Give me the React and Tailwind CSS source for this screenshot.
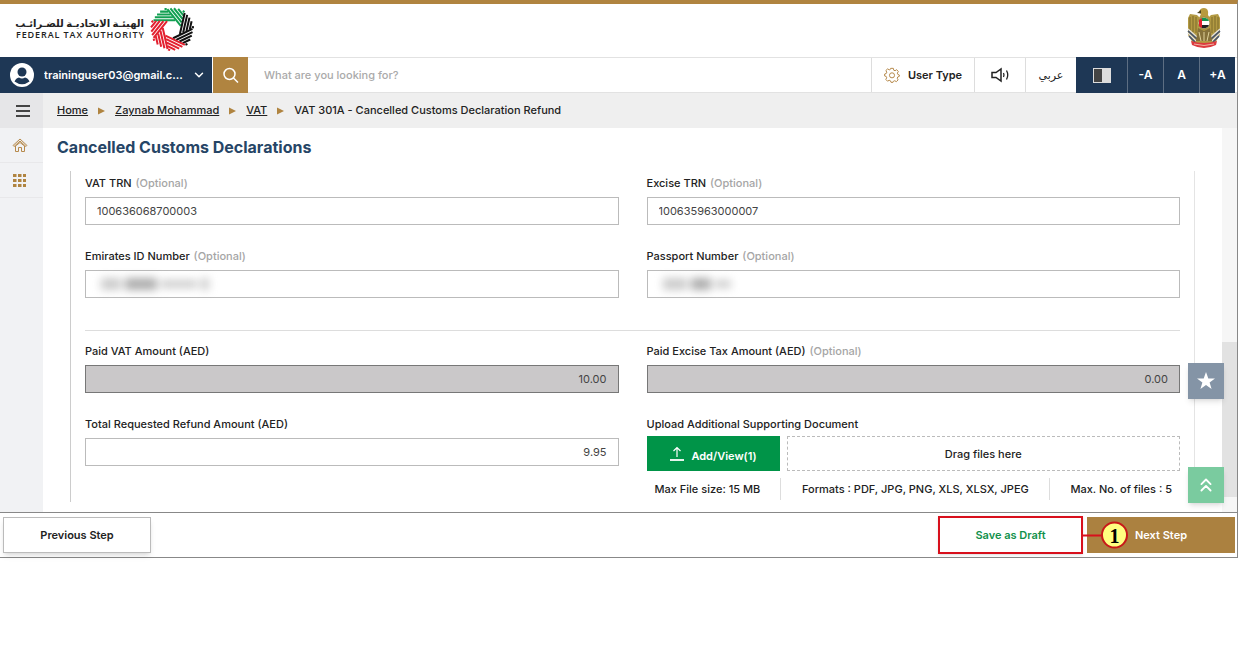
import { ChevronDown, ChevronsUp } from 'lucide-react';

// one fan of parallel stripes per side of the heptagon in the middle
const FANS = ['#12a052', '#12a052', '#111111', '#111111', '#e3202f', '#e3202f', '#e3202f'];

const LogoMark = () => (
    <svg viewBox="-50 -50 100 100" className="size-[44px]" aria-hidden="true">
        {FANS.map((color, i) => (
            <path
                key={i}
                transform={`rotate(${(i * 360) / 7})`}
                stroke={color}
                strokeWidth="4.6"
                fill="none"
                d="M-42 -20H7M-39 -26.500H2M-34 -33H-3M-27 -39.500H-8M-17 -45.500H-12"
            />
        ))}
    </svg>
);

const Emblem = () => (
    <svg viewBox="0 0 34 42" className="h-[42px] w-[34px]" aria-hidden="true">
        <path d="M1 11L3 7L10 8L14 12H20L24 8L31 7L33 11V28L28 36H6L1 28Z" fill="#b39a43" />
        <path d="M12 5Q13 1 17 1Q22 1 21 8L24 13H11L14 7Z" fill="#b89a3e" />
        <path d="M14 3L10 6L14 6.500Z" fill="#4d4423" />
        <path d="M3 10V24M6 9V25M9 10V26M25 10V26M28 9V25M31 10V24" stroke="#7d6a2a" strokeWidth="1" />
        <path d="M1 22L10 30M1 26L9 34M33 22L24 30M33 26L25 34" stroke="#e4e2dc" strokeWidth="1.400" />
        <path d="M1 24L10 32M2 29L8 35M33 24L24 32M32 29L26 35" stroke="#45546f" strokeWidth="1.600" />
        <path d="M11 21L17 24L23 21L25 34H9Z" fill="#85713a" />
        <path d="M12 25L14 34M17 25V34M22 25L20 34" stroke="#e0d29a" strokeWidth="1" />
        <circle cx="17" cy="16" r="6" fill="#fff" stroke="#9a8438" />
        <path d="M12 14A5.500 5.500 0 0 1 22 14Z" fill="#15934e" />
        <path d="M12 18A5.500 5.500 0 0 0 22 18Z" fill="#222" />
        <path d="M12 13V19L15 21V11Z" fill="#e3202f" />
        <path d="M4 34Q17 38 30 34L29 38Q17 44 5 38Z" fill="#dc3a3f" />
        <path d="M7 37Q17 40 27 37" stroke="#f0b4a4" strokeWidth="1" fill="none" />
    </svg>
);

const GearIcon = () => (
    <svg viewBox="0 0 24 24" className="size-4" fill="none" stroke="#b68a4c" strokeWidth="1.500" aria-hidden="true">
        <path d="M10 2h4l.6 2.800 2 .8L19 4l2.500 2.800-1.500 2.400.8 2 2.200.8v2l-2.500 1-.6 1.900 1.300 2.500L18.500 22l-2.400-1.400-2 .8L13.500 23h-3l-.8-2.300-2-.8L5.300 21.300 2.700 18.600l1.400-2.400-.8-2L1 13.500v-3l2.400-.8.8-2L2.800 5.300 5.500 2.800l2.300 1.500 1.700-.7z" />
        <circle cx="12" cy="12.500" r="3.800" />
    </svg>
);

const SpeakerIcon = () => (
    <svg viewBox="0 0 20 16" className="h-4 w-5" fill="none" stroke="#222" strokeWidth="1.500" aria-hidden="true">
        <path d="M2 5.500H6L11 2V14L6 10.500H2Z" />
        <path d="M13.500 6Q14.500 8 13.500 10M16.500 3.500Q19 8 16.500 12.500" strokeWidth="1.300" />
    </svg>
);

const HomeIcon = () => (
    <svg viewBox="0 0 16 16" className="size-4" fill="none" stroke="#b68a4c" strokeWidth="1" aria-hidden="true">
        <path d="M1 8.500L8 2L15 8.500L14 9.500L8 4L2 9.500Z" />
        <path d="M3.500 9V14.500H6.500V10.500H9.500V14.500H12.500V9L8 5.500Z" />
    </svg>
);

const GridIcon = () => (
    <svg viewBox="0 0 13 13" className="size-[13px]" fill="#b08440" aria-hidden="true">
        {[0, 5, 10].map((y) => [0, 5, 10].map((x) => (
            <rect key={`${x}-${y}`} x={x} y={y} width="3.500" height="3" />
        )))}
    </svg>
);

const UploadIcon = () => (
    <svg viewBox="0 0 16 16" className="size-4" fill="none" stroke="#fff" aria-hidden="true">
        <path d="M8 11V2M4.500 5L8 1.500L11.500 5" strokeWidth="1.200" />
        <path d="M1 14H15" strokeWidth="1.800" />
    </svg>
);

const StarIcon = () => (
    <svg viewBox="0 0 20 20" className="size-5" fill="currentColor" aria-hidden="true">
        <path d="M10 1L12.300 7.400H19L13.600 11.400L15.600 18L10 14L4.400 18L6.400 11.400L1 7.400H7.700Z" />
    </svg>
);

const Separator = () => (
    <svg viewBox="0 0 7 8" className="h-2 w-[7px]" fill="#b08440" aria-hidden="true">
        <path d="M0 0.500L7 4L0 7.500Z" />
    </svg>
);

// stand-in for a value that is hidden from view
const Redacted = ({ wide }) => (
    <div className="absolute top-2 left-4 flex items-center gap-1 blur-[4px]">
        <span className={`h-3 bg-[#999]/50 ${wide ? 'w-5' : 'w-6'}`} />
        <span className={`h-3 bg-[#777]/60 ${wide ? 'w-8' : 'w-5'}`} />
        <span className={`h-2 bg-[#999]/50 ${wide ? 'w-9' : 'w-4'}`} />
        {wide && <span className="h-3 w-2 bg-[#999]/50" />}
    </div>
);

const Field = ({ id, label, optional, value, numeric, disabled, masked, wide }) => (
    <div className="min-w-0 flex-1">
        <label htmlFor={id} className="block h-5 text-[11px] leading-3 font-medium text-[#222]">
            {label} {optional && <span className="ml-px text-[#a5a5a5]">(Optional)</span>}
        </label>
        <div className="relative">
            <input
                id={id}
                type="text"
                defaultValue={value}
                disabled={disabled}
                className={`block h-7 w-full border px-[11px] text-[11px] text-[#444] ${numeric ? 'text-right' : ''} ${disabled ? 'border-[#777] bg-[#cac8c9]' : 'border-[#bbb] bg-white'}`}
            />
            {masked && <Redacted wide={wide} />}
        </div>
    </div>
);

const Header = () => (
    <header className="flex h-[53px] items-start justify-between px-4 pt-[3px]">
        <div className="flex items-center gap-[6px]">
            <div className="w-32 text-right">
                <div dir="rtl" lang="ar" className="text-[10px] leading-3 font-bold whitespace-nowrap text-[#222]">الهيئـة الاتحاديـة للضـرائـب</div>
                <div className="font-['Open_Sans',sans-serif] text-[9px] leading-3 font-semibold tracking-widest whitespace-nowrap text-[#222]">FEDERAL TAX AUTHORITY</div>
            </div>
            <LogoMark />
        </div>
        <Emblem />
    </header>
);

const Toolbar = () => (
    <div className="flex h-9 border-y border-[#e2e2e2] pr-[2px] text-[11px] font-semibold text-[#222]">
        <button className="-my-px flex w-[212px] items-center bg-[#1e3755] pr-[6px] pl-[10px] text-white">
            <svg viewBox="0 0 24 24" className="mr-[10px] size-6 shrink-0" aria-hidden="true">
                <circle cx="12" cy="12" r="12" fill="#fff" />
                <circle cx="12" cy="9" r="4.500" fill="#1e3755" />
                <path d="M4.500 18.500Q6 15 9 14.500Q12 16.500 15 14.500Q18 15 19.500 18.500Q12 24 4.500 18.500Z" fill="#1e3755" />
            </svg>
            <span className="flex-1 truncate text-left">traininguser03@gmail.c...</span>
            <ChevronDown size={14} strokeWidth={2.5} />
        </button>
        <button aria-label="Search" className="-my-px ml-px flex w-[35px] items-center justify-center bg-[#b08440] text-white">
            <svg viewBox="0 0 16 16" className="size-4" fill="none" stroke="currentColor" strokeWidth="1.500" aria-hidden="true">
                <circle cx="6.500" cy="7" r="5.500" />
                <path d="M10.500 11L15 15.500" />
            </svg>
        </button>
        <input aria-label="Search text" placeholder="What are you looking for?" className="min-w-0 flex-1 px-4 font-medium placeholder:text-[#aaa]" />
        <button className="flex w-[103px] items-center justify-center gap-2 border-l border-[#ddd]">
            <GearIcon />
            User Type
        </button>
        <button aria-label="Listen" className="flex w-[51px] items-center justify-center border-l border-[#ddd]">
            <SpeakerIcon />
        </button>
        <button lang="ar" className="w-[51px] border-l border-[#ddd] font-medium">عربي</button>
        <div className="-my-px flex bg-[#1e3755] text-white">
            <button aria-label="Contrast" className="flex w-[51px] items-center justify-center">
                <span className="flex h-[15px] w-[18px] border border-[#ddd]">
                    <span className="flex-1 bg-[#444]" />
                    <span className="flex-1 bg-[#ddd]" />
                </span>
            </button>
            <button className="w-9 border-l border-[#5d6e83] text-xs">-A</button>
            <button className="w-9 border-l border-[#5d6e83] text-xs">A</button>
            <button className="w-9 border-l border-[#5d6e83] text-xs">+A</button>
        </div>
    </div>
);

const Breadcrumb = () => (
    <div className="flex h-[35px] bg-[#efefef]">
        <button aria-label="Menu" className="flex w-[43px] items-center justify-center bg-[#e6e6e8] pl-[2px]">
            <span className="flex w-[14px] flex-col gap-[3px]">
                <span className="h-[2px] bg-[#444]" />
                <span className="h-[2px] bg-[#444]" />
                <span className="h-[2px] bg-[#444]" />
            </span>
        </button>
        <nav className="flex items-center gap-[10px] pl-[14px] text-[11px] font-medium text-[#222]">
            <a href="#home" className="underline">Home</a>
            <Separator />
            <a href="#user" className="underline">Zaynab Mohammad</a>
            <Separator />
            <a href="#vat" className="underline">VAT</a>
            <Separator />
            <span>VAT 301A - Cancelled Customs Declaration Refund</span>
        </nav>
    </div>
);

const Sidebar = () => (
    <aside className="w-[43px] shrink-0 bg-[#f1f2f4]">
        <a href="#home" aria-label="Home" className="flex h-[35px] items-center justify-center border-b border-[#e8e8ea] pr-1">
            <HomeIcon />
        </a>
        <a href="#apps" aria-label="Services" className="flex h-[35px] items-center justify-center border-b border-[#e8e8ea] pr-1">
            <GridIcon />
        </a>
    </aside>
);

const Upload = () => (
    <div className="min-w-0 flex-1 text-[11px] leading-3 font-medium text-[#222]">
        <div className="h-[18px]">Upload Additional Supporting Document</div>
        <div className="flex h-[35px] gap-[7px]">
            <button type="button" className="flex w-[133px] items-center justify-center gap-[6px] bg-[#009448] font-semibold text-white">
                <UploadIcon />
                <span className="pt-1">Add/View(1)</span>
            </button>
            <div className="flex flex-1 items-center justify-center border border-dashed border-[#bbb]">Drag files here</div>
        </div>
        <div className="mt-[7px] flex h-[22px] items-center justify-between whitespace-nowrap">
            <span className="flex h-full items-center pr-5 pl-2">Max File size: 15 MB</span>
            <span className="flex h-full flex-1 items-center justify-center border-x border-[#ddd]">Formats : PDF, JPG, PNG, XLS, XLSX, JPEG</span>
            <span className="flex h-full items-center pr-2 pl-5">Max. No. of files : 5</span>
        </div>
    </div>
);

const Form = () => (
    <form className="mx-[27px] border-x border-[#ccc] border-r-[#e4e4e4] px-[14px] pt-[6px] pb-[2px]">
        <div className="flex h-[73px] gap-7">
            <Field id="vat-trn" label="VAT TRN" optional value="100636068700003" />
            <Field id="excise-trn" label="Excise TRN" optional value="100635963000007" />
        </div>
        <div className="flex h-[81px] gap-7 border-b border-[#ddd]">
            <Field id="emirates-id" label="Emirates ID Number" optional masked wide />
            <Field id="passport" label="Passport Number" optional masked />
        </div>
        <div className="flex h-[87px] gap-7 pt-[14px]">
            <Field id="paid-vat" label="Paid VAT Amount (AED)" value="10.00" numeric disabled />
            <Field id="paid-excise" label="Paid Excise Tax Amount (AED)" optional value="0.00" numeric disabled />
        </div>
        <div className="flex gap-7">
            <Field id="total-refund" label="Total Requested Refund Amount (AED)" value="9.95" numeric />
            <Upload />
        </div>
    </form>
);

const Footer = () => (
    <footer className="relative flex h-[46px] items-center gap-1 border-y border-[#888] pr-[2px] pl-[3px] text-[11px] font-semibold">
        <button className="h-9 w-[148px] border border-[#bbb] bg-white text-[#222] shadow-md">Previous Step</button>
        <button className="ml-auto h-[38px] w-[145px] border-2 border-[#d8101c] bg-white text-[#12914b] shadow-sm">Save as Draft</button>
        <button className="h-9 w-[148px] bg-[#ab8140] text-white">Next Step</button>
        <div className="absolute top-1/2 right-[109px] flex -translate-y-1/2 items-center">
            <span className="h-[2px] w-[18px] bg-[#d8101c]" />
            <span className="flex size-[27px] items-center justify-center rounded-full border-2 border-[#c81818] bg-[#ffff80] font-['Liberation_Serif',serif] text-xl font-bold text-black">1</span>
        </div>
    </footer>
);

export default function App() {
    return (
        <div className="min-h-screen bg-white font-[Inter,'DejaVu_Sans',sans-serif]">
            <div className="border-t-4 border-r border-[#b08440] border-r-[#888]">
                <Header />
                <Toolbar />
                <Breadcrumb />
                <div className="relative flex">
                    <Sidebar />
                    <main className="min-w-0 flex-1 pb-[10px]">
                        <h1 className="h-[43px] pt-[7px] pl-[14px] text-base leading-6 font-bold text-[#264566]">Cancelled Customs Declarations</h1>
                        <Form />
                    </main>
                    <div className="flex w-[15px] flex-col bg-[#f6f6f6]">
                        <div className="mt-auto mb-[15px] h-[155px] bg-[#e2e2e2]" />
                    </div>
                    <button aria-label="Favourites" className="absolute right-[13px] bottom-[113px] flex size-9 items-center justify-center bg-[#8494a6] text-white shadow-md">
                        <StarIcon />
                    </button>
                    <button aria-label="Back to top" className="absolute right-[13px] bottom-[9px] flex size-9 items-center justify-center bg-[#7acb9f] text-white shadow-md">
                        <ChevronsUp size={22} />
                    </button>
                </div>
                <Footer />
            </div>
        </div>
    );
}
